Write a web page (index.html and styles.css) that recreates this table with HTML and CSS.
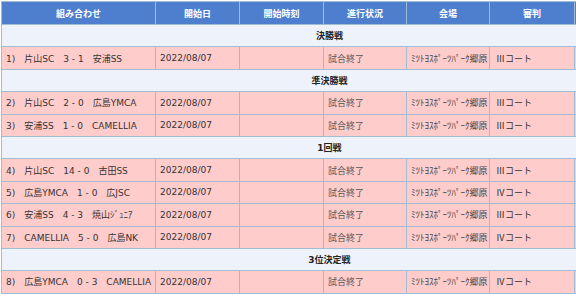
FILE: index.html
```html
<!DOCTYPE html>
<html lang="ja">
<head>
<meta charset="utf-8">
<link rel="stylesheet" href="styles.css">
</head>
<body>
<table class="results">
  <colgroup>
    <col class="c-match"><col class="c-date"><col class="c-time"><col class="c-status"><col class="c-venue"><col class="c-ref"><col class="c-extra">
  </colgroup>
  <thead>
    <tr class="head">
      <th>組み合わせ</th><th>開始日</th><th>開始時刻</th><th>進行状況</th><th>会場</th><th>審判</th><th></th>
    </tr>
  </thead>
  <tbody>
    <tr class="section"><td colspan="7">決勝戦</td></tr>
    <tr class="row"><td>1)　片山SC　3 - 1　安浦SS</td><td>2022/08/07</td><td></td><td class="status">試合終了</td><td class="venue">ﾐﾂﾄﾖｽﾎﾟｰﾂﾊﾟｰｸ郷原</td><td class="court">Ⅲコート</td><td></td></tr>
    <tr class="section"><td colspan="7">準決勝戦</td></tr>
    <tr class="row"><td>2)　片山SC　2 - 0　広島YMCA</td><td>2022/08/07</td><td></td><td class="status">試合終了</td><td class="venue">ﾐﾂﾄﾖｽﾎﾟｰﾂﾊﾟｰｸ郷原</td><td class="court">Ⅲコート</td><td></td></tr>
    <tr class="row"><td>3)　安浦SS　1 - 0　CAMELLIA</td><td>2022/08/07</td><td></td><td class="status">試合終了</td><td class="venue">ﾐﾂﾄﾖｽﾎﾟｰﾂﾊﾟｰｸ郷原</td><td class="court">Ⅲコート</td><td></td></tr>
    <tr class="section"><td colspan="7">1回戦</td></tr>
    <tr class="row"><td>4)　片山SC　14 - 0　古田SS</td><td>2022/08/07</td><td></td><td class="status">試合終了</td><td class="venue">ﾐﾂﾄﾖｽﾎﾟｰﾂﾊﾟｰｸ郷原</td><td class="court">Ⅲコート</td><td></td></tr>
    <tr class="row"><td>5)　広島YMCA　1 - 0　広JSC</td><td>2022/08/07</td><td></td><td class="status">試合終了</td><td class="venue">ﾐﾂﾄﾖｽﾎﾟｰﾂﾊﾟｰｸ郷原</td><td class="court">Ⅳコート</td><td></td></tr>
    <tr class="row"><td>6)　安浦SS　4 - 3　焼山ｼﾞｭﾆｱ</td><td>2022/08/07</td><td></td><td class="status">試合終了</td><td class="venue">ﾐﾂﾄﾖｽﾎﾟｰﾂﾊﾟｰｸ郷原</td><td class="court">Ⅲコート</td><td></td></tr>
    <tr class="row"><td>7)　CAMELLIA　5 - 0　広島NK</td><td>2022/08/07</td><td></td><td class="status">試合終了</td><td class="venue">ﾐﾂﾄﾖｽﾎﾟｰﾂﾊﾟｰｸ郷原</td><td class="court">Ⅳコート</td><td></td></tr>
    <tr class="section"><td colspan="7">3位決定戦</td></tr>
    <tr class="row"><td>8)　広島YMCA　0 - 3　CAMELLIA</td><td>2022/08/07</td><td></td><td class="status">試合終了</td><td class="venue">ﾐﾂﾄﾖｽﾎﾟｰﾂﾊﾟｰｸ郷原</td><td class="court">Ⅳコート</td><td></td></tr>
  </tbody>
</table>
</body>
</html>
```
FILE: styles.css
```css
html, body {
  margin: 0;
  padding: 0;
  overflow: hidden;
  background: #ffffff;
}
body {
  padding: 1px 0 0 1px;
  font-family: "DejaVu Sans", "Noto Sans CJK JP", sans-serif;
  font-size: 9px;
  color: #333333;
}
.results {
  border-collapse: collapse;
  table-layout: fixed;
  width: 656px;
}
.c-match { width: 154px; }
.c-date { width: 84px; }
.c-time { width: 84px; }
.c-status { width: 83px; }
.c-venue { width: 83px; }
.c-ref { width: 85px; }
.c-extra { width: 83px; }
.results th,
.results td {
  border: 1px solid #a2bdd3;
  padding: 0 4px;
  white-space: nowrap;
  overflow: hidden;
  vertical-align: middle;
  text-align: left;
}
.head th {
  background: #4e7fce;
  color: #ffffff;
  font-weight: bold;
  text-align: center;
  height: 22px;
  border-color: #a2bdd3;
}
.section td {
  background: #eef3fb;
  color: #222222;
  font-weight: bold;
  text-align: center;
  height: 21.4px;
}
.row td {
  background: #ffcccc;
  height: 21.4px;
}
.row td.status { color: #555555; }
.row td.venue { color: #444444; }
.row td.court {
  font-family: "Noto Sans CJK JP", sans-serif;
  padding-left: 6px;
}
```
